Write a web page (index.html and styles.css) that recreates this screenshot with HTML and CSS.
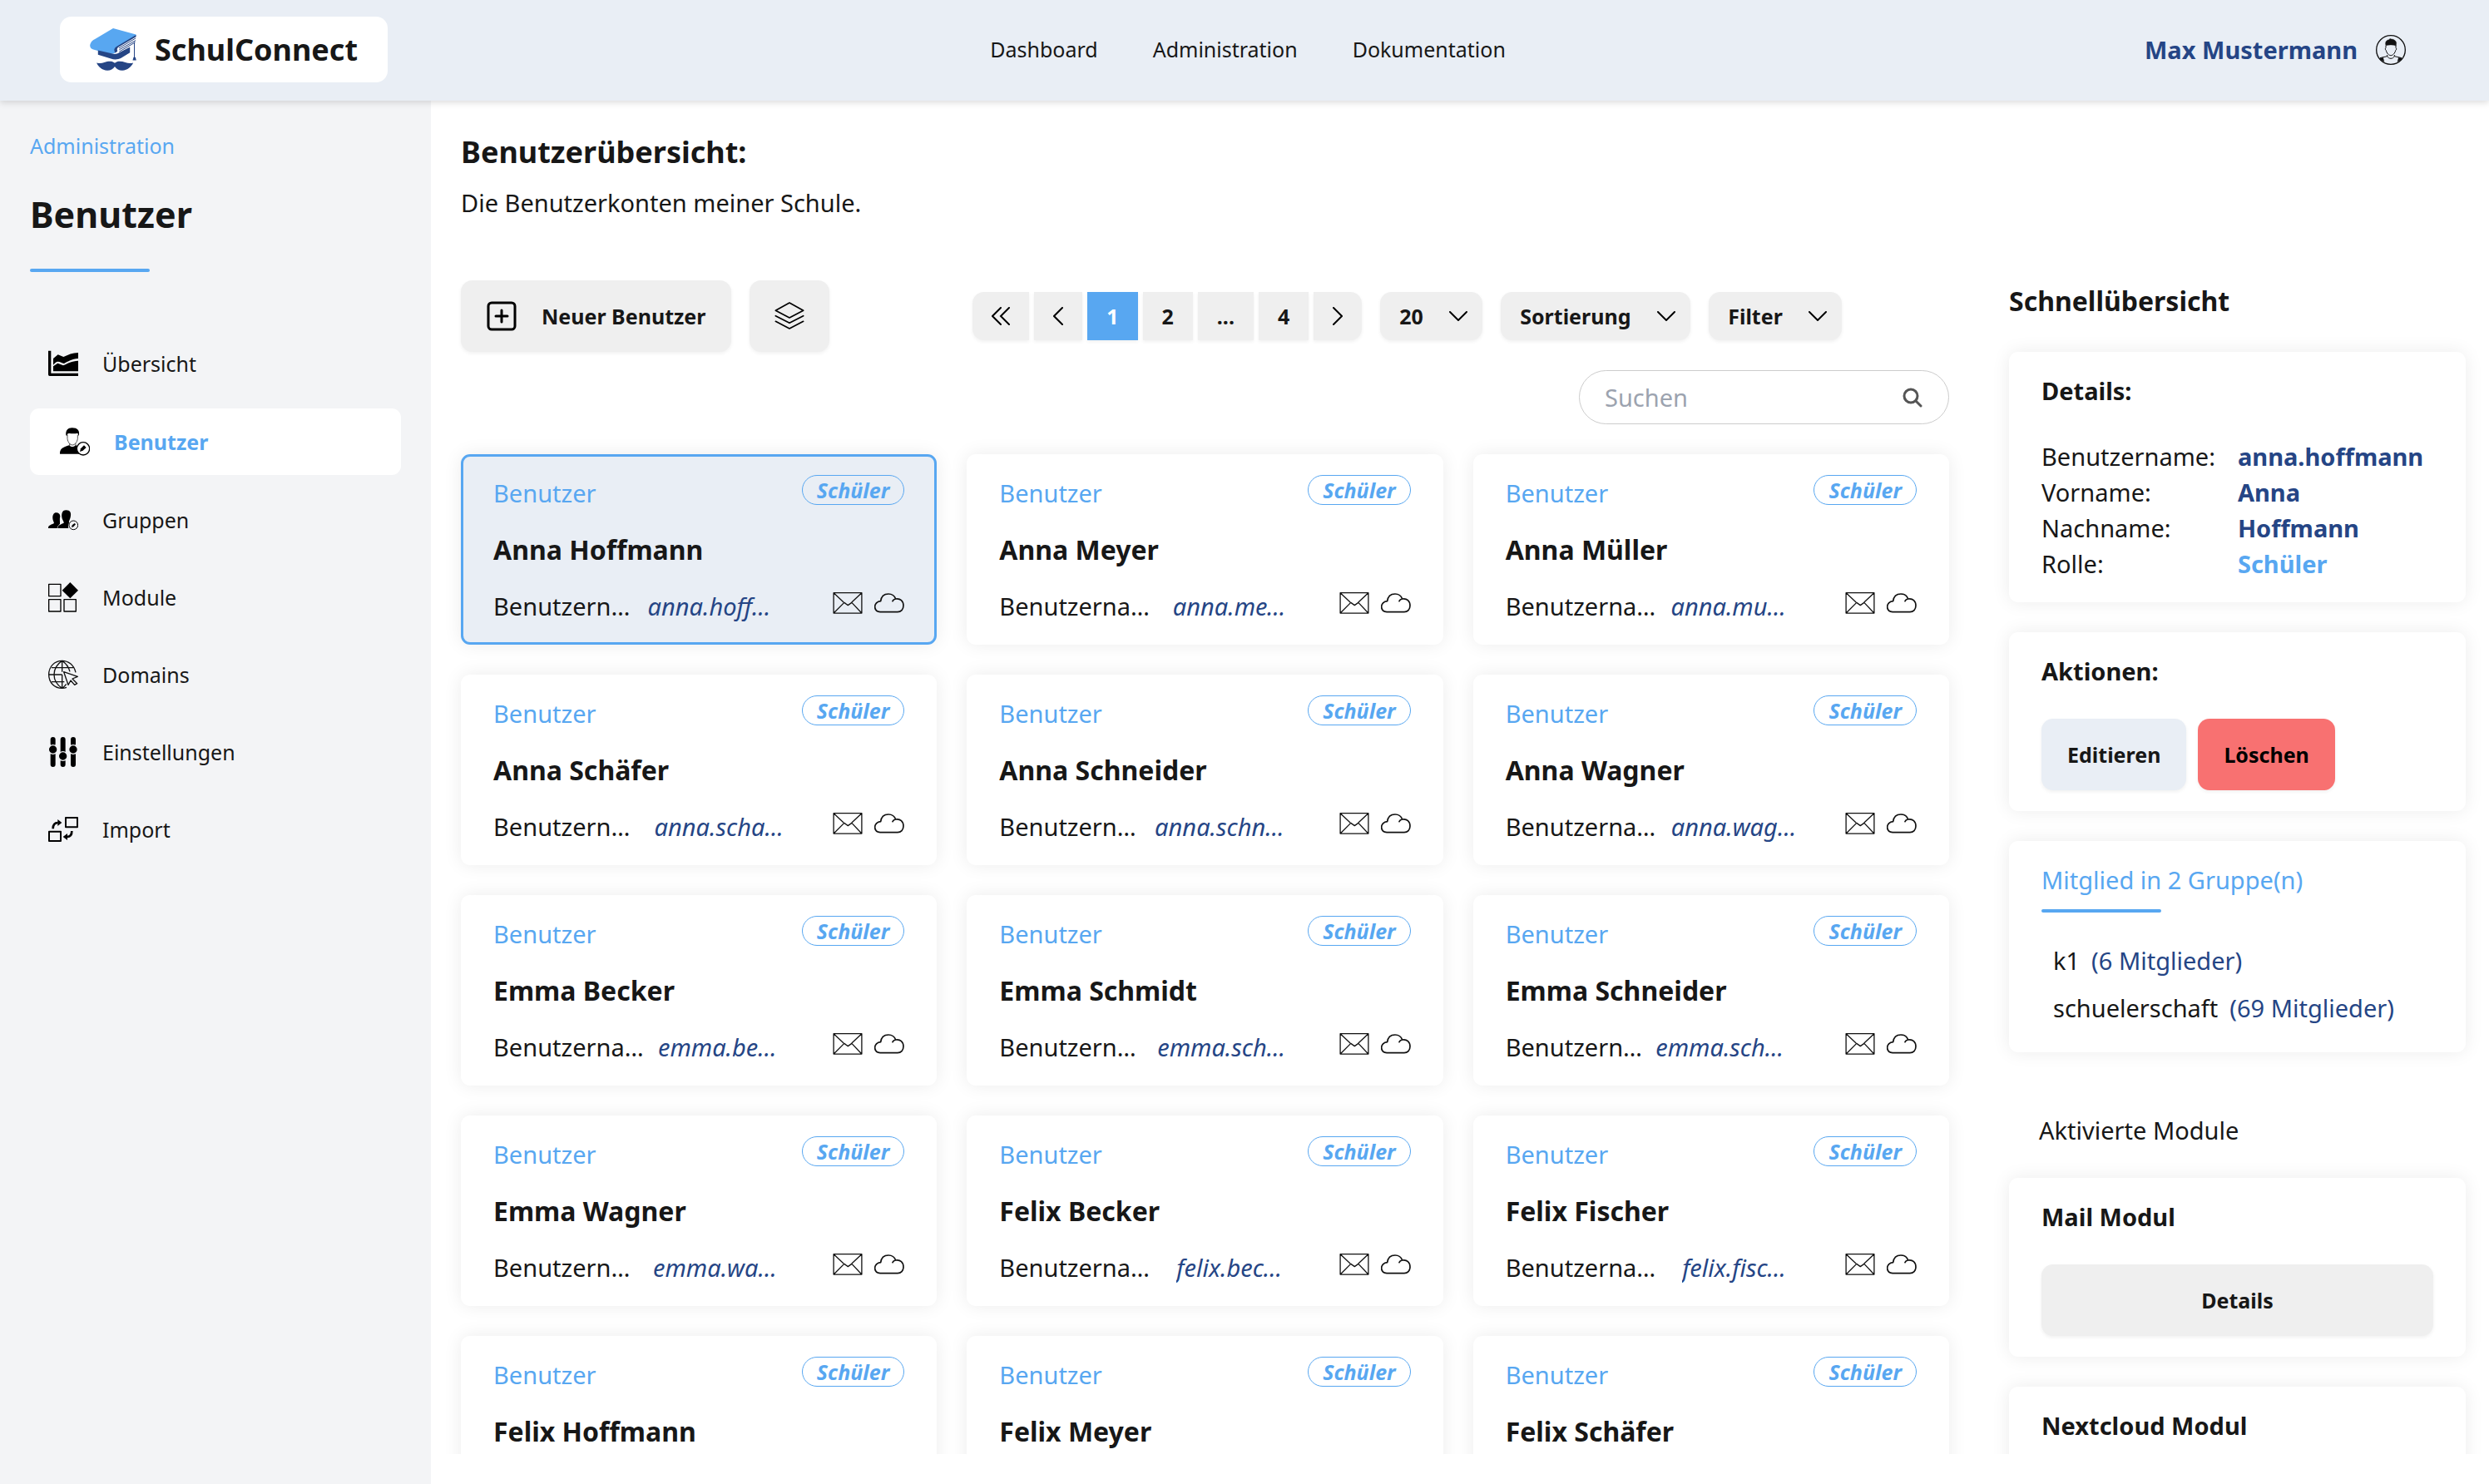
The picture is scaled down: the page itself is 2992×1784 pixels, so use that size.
FILE: index.html
```html
<!DOCTYPE html>
<html lang="de">
<head>
    <meta charset="UTF-8">
    <meta name="viewport" content="width=device-width, initial-scale=1.0">
    <title>SchulConnect - Benutzer</title>
    <link rel="stylesheet" href="styles.css">
</head>
<body>

    <!-- Icons -->
    <svg class="sprite" aria-hidden="true">
        <symbol id="mail" viewBox="0 0 108 80">
            <path d="M2 2h104v75H2z M3 3l36 34 M105 3L69 37 M3 76l38-38 14 10 14-10 36 38" fill="none" stroke="#111" stroke-width="4" stroke-linejoin="round"/>
        </symbol>
        <symbol id="cloud" viewBox="0 0 108 72">
            <path d="M21 68C9 67 2 59 2 49c0-10 8-19 21-20C25 12 36 3 51 3c12 0 22 7 26 18 17-3 28 8 28 24 0 14-9 23-21 23zM66 29c2-5 6-7 11-8" fill="none" stroke="#111" stroke-width="5" stroke-linecap="round" stroke-linejoin="round"/>
        </symbol>
    </svg>

    <header class="header">
        <a href="#" class="logo">
            <svg class="logo-icon" viewBox="0 0 168 154">
                <path d="M84 0l83 23v5L96 70c-7 5-8 12-5 20-16 6-30 0-46-4L12 77C2 74-2 66 1 57c3-9 9-14 17-18z" fill="#58a7f1"/>
                <path d="M29 80l56 13c8 1 15-1 21-5l39-20v20l-32 20c-12 6-25 7-37 2l-47-14z" fill="#254585"/>
                <path d="M167 24v7L104 68c-6 4-7 9-4 14-3 4-6 6-9 7-5-9-4-17 4-22z" fill="#254585"/>
                <path d="M166 36l-61 36M166 44l-60 34M164 51l-58 34M161 50v56" fill="none" stroke="#254585" stroke-width="3"/>
                <path d="M155 116l3-11h7l3 11z" fill="#254585"/>
                <path d="M90 126c8-8 24-8 38-2 11 4 20 4 29 1-8 16-20 26-40 28-12 0-21-4-27-14-6 10-15 14-27 14-20-2-32-12-39-28 9 3 18 3 28-1 14-6 30-6 38 2z" fill="#254585"/>
            </svg>
            SchulConnect
        </a>
        <nav class="nav">
            <a href="#">Dashboard</a>
            <a href="#">Administration</a>
            <a href="#">Dokumentation</a>
        </nav>
        <a href="#" class="user">
            Max Mustermann
            <svg class="icon" viewBox="0 0 108 108" fill="none" stroke="#111">
                <circle cx="54" cy="54" r="52" stroke-width="4"/>
                <path d="M36 38c-4-12 2-20 11-21 4-5 7-4 9-2 9 0 16 5 18 13l-1 11c-11-4-24-4-37-1z" fill="#111"/>
                <path d="M36 38v9c-3 1-3 6 1 9 2 10 10 18 17 18s15-8 17-18c4-3 4-8 1-9v-9M41 72v5l-26 6M67 72v5l26 6M41 76c4 12 22 12 26 0" stroke-width="3"/>
                <path d="M12 86l14-5 4 16zM96 86l-14-5-4 16z" fill="#111"/>
            </svg>
        </a>
    </header>

    <div class="page">
        <aside class="sidebar">
            <a href="#" class="back">Administration</a>
            <h1>Benutzer</h1>
            <div class="line"></div>
            <nav class="menu">
                <a href="#">
                    <svg class="icon" viewBox="0 0 108 108">
                        <path d="M5 8v86h103" fill="none" stroke="#000" stroke-width="10" stroke-linejoin="round"/>
                        <path d="M18 50v-14L35 22l20 8c17-8 32-14 53-15v21c-23 1-37 11-51 18-8-2-14-7-22-7-7 0-11 6-17 12z"/>
                        <path d="M18 82V64l16-11 20 8c17-8 30-16 54-17v38z"/>
                    </svg>
                    Übersicht
                </a>
                <a href="#" class="active">
                    <svg class="icon" viewBox="0 0 108 108">
                        <path d="M22 31C20 13 29 4 44 4c20 0 29 10 24 30l-4-11c-12 4-24 1-32 1-5 1-6 4-6 9z"/>
                        <path d="M27 29v14c2 14 10 23 18 23s17-9 19-23V29M35 61v8M57 61v8" fill="none" stroke="#000" stroke-width="2"/>
                        <path d="M0 98c0-17 7-23 33-31 7 7 17 7 24 0l13 4v27z"/>
                        <circle cx="84" cy="79" r="23" fill="#fff" stroke="#000" stroke-width="4"/>
                        <path d="M72 90l3-11 12-12 8 8-12 11z"/>
                    </svg>
                    Benutzer
                </a>
                <a href="#">
                    <svg class="icon" viewBox="0 0 108 108">
                        <path d="M0 84c0-9 6-11 20-17 3-3-3-7-4-18-1-13 4-21 13-21 8 0 14 5 14 13-3 10 0 20-1 27-4 5-9 8-10 16z"/>
                        <path d="M34 84c0-10 7-12 22-19 2-4-5-9-7-21-2-16 4-26 16-25 14 0 19 10 15 26-2 9-7 15-5 20-3 5-4 12-2 19z"/>
                        <circle cx="91" cy="73" r="16" fill="#f3f4f6" stroke="#000" stroke-width="3"/>
                        <path d="M84 81l2-8 9-7 4 4-8 9z"/>
                    </svg>
                    Gruppen
                </a>
                <a href="#">
                    <svg class="icon" viewBox="0 0 108 108">
                        <path d="M2 7h43v43H2zM2 62h43v43H2zM57 62h43v43H57z" fill="none" stroke="#000" stroke-width="4" stroke-linejoin="round"/>
                        <path d="M79 0l29 29-29 29-29-29z"/>
                    </svg>
                    Module
                </a>
                <a href="#">
                    <svg class="icon" viewBox="0 0 108 108" fill="none" stroke="#111" stroke-width="4">
                        <path d="M99 46C92 18 72 4 50 4 22 4 2 26 2 54s20 49 48 49c6 0 11-1 16-3M50 4v40M50 54v49M50 4C32 16 21 34 21 54s12 38 29 49M50 4c15 10 24 24 28 39M12 29h78M2 54h48M12 80h46M50 103c7-5 11-9 15-15"/>
                        <path d="M56 44l50 17-19 8 17 17-9 5-14-16-9 16z" stroke-linejoin="round"/>
                    </svg>
                    Domains
                </a>
                <a href="#">
                    <svg class="icon" viewBox="0 0 108 108">
                        <path d="M17 9v15M17 63v36M53 9v45M53 88v11M90 9v15M90 63v36" stroke="#000" stroke-width="18" stroke-linecap="round"/>
                        <g stroke="#f3f4f6" stroke-width="4">
                            <circle cx="17" cy="45" r="16"/>
                            <circle cx="53" cy="69" r="16"/>
                            <circle cx="90" cy="45" r="16"/>
                        </g>
                    </svg>
                    Einstellungen
                </a>
                <a href="#">
                    <svg class="icon" viewBox="0 0 108 108">
                        <path d="M63 12h42v34H63zM3 62h42v34H3z" fill="none" stroke="#000" stroke-width="6" stroke-linejoin="round"/>
                        <path d="M17 52c0-17 7-22 18-22M85 60c0 14-5 21-17 21" fill="none" stroke="#000" stroke-width="8"/>
                        <path d="M34 18l15 12-15 12zM69 69L53 81l16 12z"/>
                    </svg>
                    Import
                </a>
            </nav>
        </aside>

        <main class="main">
            <div class="content">
                <h2>Benutzerübersicht:</h2>
                <p>Die Benutzerkonten meiner Schule.</p>

                <div class="columns">
                    <section class="list">
                        <div class="toolbar">
                            <div class="tools">
                                <button class="btn">
                                    <svg class="icon" viewBox="0 0 36 36" fill="none" stroke="#000" stroke-width="3" stroke-linecap="round">
                                        <rect x="2" y="2" width="32" height="32" rx="4"/>
                                        <path d="M18 11v14M11 18h14"/>
                                    </svg>
                                    Neuer Benutzer
                                </button>
                                <button class="btn btn-layers" aria-label="Mehrere">
                                    <svg class="icon" viewBox="0 0 108 108" fill="none" stroke="#000" stroke-width="5" stroke-linejoin="round" stroke-linecap="round">
                                        <path d="M54 6l50 28-50 26L4 34zM4 53l50 26 50-26M4 73l50 26 50-26"/>
                                    </svg>
                                </button>
                            </div>
                            <div class="filters">
                                <div class="pages">
                                    <button aria-label="Erste Seite"><svg class="icon-double" viewBox="0 0 22 22"><path d="M11 1L1 11l10 10M21 1L11 11l10 10"/></svg></button>
                                    <button aria-label="Zurück"><svg class="icon-arrow" viewBox="0 0 12 22"><path d="M11 1L1 11l10 10"/></svg></button>
                                    <button class="current">1</button>
                                    <button>2</button>
                                    <button>...</button>
                                    <button>4</button>
                                    <button aria-label="Weiter"><svg class="icon-arrow" viewBox="0 0 12 22"><path d="M1 1l10 10L1 21"/></svg></button>
                                </div>
                                <select aria-label="Anzahl pro Seite"><option>20</option></select>
                                <select aria-label="Sortierung"><option>Sortierung</option></select>
                                <select aria-label="Filter"><option>Filter</option></select>
                            </div>
                        </div>

                        <div class="search">
                            <input type="text" placeholder="Suchen" aria-label="Suchen">
                            <svg class="icon-search" viewBox="0 0 24 24" fill="none" stroke="#555" stroke-width="3" stroke-linecap="round"><circle cx="10" cy="10" r="8"/><path d="M16 16l6 6"/></svg>
                        </div>

                        <div class="cards">
                            <article class="card selected">
                                <div class="card-top"><span>Benutzer</span><em class="badge">Schüler</em></div>
                                <h3>Anna Hoffmann</h3>
                                <div class="card-bottom">
                                    <div class="name"><span>Benutzername:</span><em>anna.hoffmann</em></div>
                                    <div class="modules"><svg><use href="#mail"/></svg><svg><use href="#cloud"/></svg></div>
                                </div>
                            </article>
                            <article class="card">
                                <div class="card-top"><span>Benutzer</span><em class="badge">Schüler</em></div>
                                <h3>Anna Meyer</h3>
                                <div class="card-bottom">
                                    <div class="name"><span>Benutzername:</span><em>anna.meyer</em></div>
                                    <div class="modules"><svg><use href="#mail"/></svg><svg><use href="#cloud"/></svg></div>
                                </div>
                            </article>
                            <article class="card">
                                <div class="card-top"><span>Benutzer</span><em class="badge">Schüler</em></div>
                                <h3>Anna Müller</h3>
                                <div class="card-bottom">
                                    <div class="name"><span>Benutzername:</span><em>anna.mueller</em></div>
                                    <div class="modules"><svg><use href="#mail"/></svg><svg><use href="#cloud"/></svg></div>
                                </div>
                            </article>
                            <article class="card">
                                <div class="card-top"><span>Benutzer</span><em class="badge">Schüler</em></div>
                                <h3>Anna Schäfer</h3>
                                <div class="card-bottom">
                                    <div class="name"><span>Benutzername:</span><em>anna.schaefer</em></div>
                                    <div class="modules"><svg><use href="#mail"/></svg><svg><use href="#cloud"/></svg></div>
                                </div>
                            </article>
                            <article class="card">
                                <div class="card-top"><span>Benutzer</span><em class="badge">Schüler</em></div>
                                <h3>Anna Schneider</h3>
                                <div class="card-bottom">
                                    <div class="name"><span>Benutzername:</span><em>anna.schneider</em></div>
                                    <div class="modules"><svg><use href="#mail"/></svg><svg><use href="#cloud"/></svg></div>
                                </div>
                            </article>
                            <article class="card">
                                <div class="card-top"><span>Benutzer</span><em class="badge">Schüler</em></div>
                                <h3>Anna Wagner</h3>
                                <div class="card-bottom">
                                    <div class="name"><span>Benutzername:</span><em>anna.wagner</em></div>
                                    <div class="modules"><svg><use href="#mail"/></svg><svg><use href="#cloud"/></svg></div>
                                </div>
                            </article>
                            <article class="card">
                                <div class="card-top"><span>Benutzer</span><em class="badge">Schüler</em></div>
                                <h3>Emma Becker</h3>
                                <div class="card-bottom">
                                    <div class="name"><span>Benutzername:</span><em>emma.becker</em></div>
                                    <div class="modules"><svg><use href="#mail"/></svg><svg><use href="#cloud"/></svg></div>
                                </div>
                            </article>
                            <article class="card">
                                <div class="card-top"><span>Benutzer</span><em class="badge">Schüler</em></div>
                                <h3>Emma Schmidt</h3>
                                <div class="card-bottom">
                                    <div class="name"><span>Benutzername:</span><em>emma.schmidt</em></div>
                                    <div class="modules"><svg><use href="#mail"/></svg><svg><use href="#cloud"/></svg></div>
                                </div>
                            </article>
                            <article class="card">
                                <div class="card-top"><span>Benutzer</span><em class="badge">Schüler</em></div>
                                <h3>Emma Schneider</h3>
                                <div class="card-bottom">
                                    <div class="name"><span>Benutzername:</span><em>emma.schneider</em></div>
                                    <div class="modules"><svg><use href="#mail"/></svg><svg><use href="#cloud"/></svg></div>
                                </div>
                            </article>
                            <article class="card">
                                <div class="card-top"><span>Benutzer</span><em class="badge">Schüler</em></div>
                                <h3>Emma Wagner</h3>
                                <div class="card-bottom">
                                    <div class="name"><span>Benutzername:</span><em>emma.wagner</em></div>
                                    <div class="modules"><svg><use href="#mail"/></svg><svg><use href="#cloud"/></svg></div>
                                </div>
                            </article>
                            <article class="card">
                                <div class="card-top"><span>Benutzer</span><em class="badge">Schüler</em></div>
                                <h3>Felix Becker</h3>
                                <div class="card-bottom">
                                    <div class="name"><span>Benutzername:</span><em>felix.becker</em></div>
                                    <div class="modules"><svg><use href="#mail"/></svg><svg><use href="#cloud"/></svg></div>
                                </div>
                            </article>
                            <article class="card">
                                <div class="card-top"><span>Benutzer</span><em class="badge">Schüler</em></div>
                                <h3>Felix Fischer</h3>
                                <div class="card-bottom">
                                    <div class="name"><span>Benutzername:</span><em>felix.fischer</em></div>
                                    <div class="modules"><svg><use href="#mail"/></svg><svg><use href="#cloud"/></svg></div>
                                </div>
                            </article>
                            <article class="card">
                                <div class="card-top"><span>Benutzer</span><em class="badge">Schüler</em></div>
                                <h3>Felix Hoffmann</h3>
                            </article>
                            <article class="card">
                                <div class="card-top"><span>Benutzer</span><em class="badge">Schüler</em></div>
                                <h3>Felix Meyer</h3>
                            </article>
                            <article class="card">
                                <div class="card-top"><span>Benutzer</span><em class="badge">Schüler</em></div>
                                <h3>Felix Schäfer</h3>
                            </article>
                        </div>
                    </section>

                    <aside class="overview">
                        <h3>Schnellübersicht</h3>
                        <div class="card">
                            <h4>Details:</h4>
                            <table class="details">
                                <tr><th>Benutzername:</th><td>anna.hoffmann</td></tr>
                                <tr><th>Vorname:</th><td>Anna</td></tr>
                                <tr><th>Nachname:</th><td>Hoffmann</td></tr>
                                <tr><th>Rolle:</th><td class="role">Schüler</td></tr>
                            </table>
                        </div>
                        <div class="card">
                            <h4>Aktionen:</h4>
                            <div class="actions">
                                <button class="btn btn-edit">Editieren</button>
                                <button class="btn btn-delete">Löschen</button>
                            </div>
                        </div>
                        <div class="card">
                            <p class="groups-title">Mitglied in 2 Gruppe(n)</p>
                            <div class="line"></div>
                            <ul class="groups">
                                <li>k1 <span>(6 Mitglieder)</span></li>
                                <li>schuelerschaft <span>(69 Mitglieder)</span></li>
                            </ul>
                        </div>
                        <p class="modules-title">Aktivierte Module</p>
                        <div class="card">
                            <h4>Mail Modul</h4>
                            <button class="btn btn-wide">Details</button>
                        </div>
                        <div class="card">
                            <h4>Nextcloud Modul</h4>
                            <button class="btn btn-wide">Details</button>
                        </div>
                    </aside>
                </div>
            </div>
        </main>
    </div>

</body>
</html>
```
FILE: styles.css
```css
* {
    margin: 0;
    padding: 0;
    box-sizing: border-box;
}
body {
    height: 100vh;
    display: flex;
    flex-direction: column;
    overflow: hidden;
    font-family: "Noto Sans", sans-serif;
    font-size: 29px;
    line-height: 43px;
    color: #171717;
    background-color: white;
}
a {
    color: inherit;
    text-decoration: none;
}
button, input, select {
    font-family: inherit;
    color: inherit;
    border: none;
}
.sprite {
    display: none;
}
.icon {
    width: 36px;
    height: 36px;
    flex-shrink: 0;
}
.line {
    width: 144px;
    height: 4px;
    border-radius: 2px;
    background-color: #58a7f1;
}

/* Kopfzeile */
.header {
    display: flex;
    justify-content: space-between;
    align-items: center;
    padding: 20px 72px 22px;
    background-color: #e9eef5;
    box-shadow: 0 2px 8px rgba(0, 0, 0, 0.15);
    position: relative;
    z-index: 1;
}
.logo {
    display: flex;
    align-items: center;
    gap: 22px;
    padding: 14px 36px;
    border-radius: 14px;
    background: white;
    font-size: 36px;
    font-weight: bold;
    line-height: 51px;
}
.logo-icon {
    width: 56px;
    height: 51px;
}
.nav {
    display: flex;
    gap: 66px;
    font-size: 25px;
}
.user {
    display: flex;
    align-items: center;
    gap: 22px;
    padding: 0 28px 0 44px;
    font-weight: bold;
    color: #254585;
}

.page {
    flex: 1;
    min-height: 0;
    display: flex;
}

/* Seitenleiste */
.sidebar {
    flex: 0 0 518px;
    padding: 36px;
    background-color: #f3f4f6;
}
.back {
    display: block;
    font-size: 25px;
    line-height: 36px;
    color: #58a7f1;
}
.sidebar h1 {
    margin: 36px 0;
    font-size: 43px;
    line-height: 58px;
}
.menu {
    display: flex;
    flex-direction: column;
    gap: 15px;
    margin-top: 71px;
    font-size: 25px;
    line-height: 36px;
}
.menu a {
    display: flex;
    align-items: center;
    gap: 29px;
    padding: 21px 22px;
    border-radius: 11px;
}
.menu a.active {
    padding: 22px 36px;
    background: white;
    color: #58a7f1;
    font-weight: bold;
}

/* Inhalt */
.main {
    flex: 1;
    min-width: 0;
    padding-bottom: 36px;
}
.content {
    height: 100%;
    overflow: hidden;
    padding: 36px 28px 0 36px;
}
.content h2 {
    margin-bottom: 14px;
    font-size: 36px;
    line-height: 51px;
}
.columns {
    display: grid;
    grid-template-columns: minmax(0, 1fr) 549px;
    gap: 72px;
    margin-top: 72px;
}
.toolbar {
    display: flex;
    gap: 43px;
}
.tools {
    display: flex;
    gap: 22px;
}
.btn {
    display: flex;
    justify-content: center;
    align-items: center;
    gap: 30px;
    height: 86px;
    padding: 0 31px;
    border-radius: 14px;
    background-color: #efefef;
    box-shadow: 0 2px 4px rgba(0, 0, 0, 0.06);
    font-size: 25px;
    font-weight: bold;
}
.btn-layers {
    padding: 0 30px;
}
.filters {
    flex: 1;
    display: flex;
    justify-content: center;
    align-items: center;
    gap: 22px;
}
.pages {
    display: flex;
    gap: 6px;
}
.pages button, .filters select {
    height: 58px;
    padding: 0 23px;
    background-color: #efefef;
    box-shadow: 0 2px 4px rgba(0, 0, 0, 0.06);
    font-size: 25px;
    font-weight: bold;
}
.pages button:first-child {
    border-radius: 14px 0 0 14px;
}
.pages button:last-child {
    border-radius: 0 14px 14px 0;
}
.pages .current {
    background-color: #58a7f1;
    color: white;
}
.pages svg {
    display: block;
    height: 22px;
    fill: none;
    stroke: #000;
    stroke-width: 2;
    stroke-linecap: round;
}
.icon-double {
    width: 22px;
}
.icon-arrow {
    width: 12px;
}
.filters select {
    appearance: none;
    padding-right: 71px;
    border-radius: 14px;
    background: #efefef url("data:image/svg+xml,%3Csvg xmlns='http://www.w3.org/2000/svg' viewBox='0 0 22 12'%3E%3Cpath d='M1 1l10 10L21 1' fill='none' stroke='black' stroke-width='2' stroke-linecap='round'/%3E%3C/svg%3E") no-repeat right 18px center / 22px 12px;
}
.search {
    display: flex;
    align-items: center;
    width: 445px;
    height: 65px;
    margin: 22px 0 36px auto;
    padding: 0 31px 0 30px;
    border: 1px solid #ccc;
    border-radius: 33px;
}
.search input {
    flex: 1;
    min-width: 0;
    background: none;
    outline: none;
    font-size: 29px;
}
.search input::placeholder {
    color: #9ca3af;
}
.icon-search {
    width: 24px;
    height: 24px;
}

/* Karten */
.cards {
    display: grid;
    grid-template-columns: repeat(3, minmax(0, 1fr));
    gap: 36px;
}
.card {
    padding: 22px 36px;
    border: 3px solid transparent;
    border-radius: 11px;
    background: white;
    box-shadow: 0 0 22px rgba(0, 0, 0, 0.08);
}
.card.selected {
    border-color: #58a7f1;
    background-color: #e9eef5;
}
.card-top {
    display: flex;
    justify-content: space-between;
    align-items: flex-start;
    color: #58a7f1;
}
.badge {
    padding: 0 17px;
    border: 1px solid #58a7f1;
    border-radius: 18px;
    font-size: 25px;
    font-weight: bold;
    line-height: 34px;
}
.cards h3 {
    margin: 22px 0;
    font-size: 32px;
    line-height: 49px;
}
.card-bottom {
    display: grid;
    grid-template-columns: 3fr 1fr;
    gap: 27px;
}
.name {
    display: flex;
    gap: 14px;
    min-width: 0;
}
.name span, .name em {
    overflow: hidden;
    text-overflow: ellipsis;
    white-space: nowrap;
}
.name em {
    color: #254585;
}
.modules {
    display: flex;
    justify-content: flex-end;
    align-items: center;
    gap: 14px;
}
.modules svg {
    width: 36px;
    height: 26px;
    margin-bottom: 7px;
}

/* Schnellübersicht */
.overview {
    display: flex;
    flex-direction: column;
    gap: 36px;
}
.overview h3 {
    font-size: 32px;
    line-height: 50px;
}
.overview h4 {
    margin-bottom: 36px;
    font-size: 29px;
}
.details {
    border-collapse: collapse;
}
.details th {
    padding-right: 27px;
    font-weight: normal;
    text-align: left;
}
.details td {
    color: #254585;
    font-weight: bold;
}
.details .role {
    color: #58a7f1;
}
.actions {
    display: flex;
    gap: 14px;
}
.btn-edit {
    background-color: #e9eef5;
}
.btn-delete {
    background-color: #f87171;
    color: #000;
}
.groups-title {
    margin-bottom: 14px;
    color: #58a7f1;
}
.groups {
    padding: 29px 14px 0;
    list-style: none;
}
.groups li {
    display: flex;
    gap: 14px;
    padding: 7px 0;
}
.groups span {
    color: #254585;
}
.modules-title {
    margin-top: 36px;
    padding-left: 36px;
}
.btn-wide {
    width: 100%;
}
```
